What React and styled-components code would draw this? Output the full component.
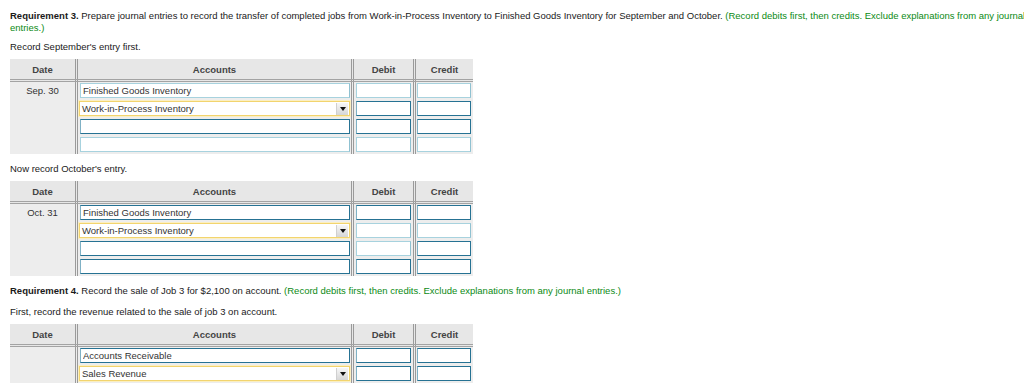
import styled, { createGlobalStyle } from 'styled-components';

const GlobalStyle = createGlobalStyle`
	html, body {
		margin: 0;
		padding: 0;
		background: #ffffff;
		overflow: hidden;
	}

	body {
		font-family: 'Liberation Sans', Arial, sans-serif;
		font-size: 9.5px;
		color: #1a1a1a;
	}
`;

const Page = styled.div`
	width: 1032px;
	padding: 10px 0 0 10px;
`;

const Prompt = styled.p`
	margin: ${({ $gap }) => $gap || 0}px 0 0;
	line-height: 12px;
`;

const Strong = styled.b`
	font-weight: 700;
`;

const Hint = styled.span`
	color: #0b8a14;
`;

const Journal = styled.table`
	margin: 6px 0 0;
	border-collapse: collapse;
	border-spacing: 0;
	background: #ededed;
	table-layout: fixed;
`;

const HeadCell = styled.th`
	width: ${({ $w }) => $w}px;
	height: 20px;
	padding: 0;
	background: #e7e7e7;
	color: #444444;
	font-weight: 700;
	font-size: 9.5px;
	text-align: center;
	border-bottom: 3px double #a3a3a3;
	border-right: ${({ $last }) => ($last ? 'none' : '3px double #9a9a9a')};
`;

const Cell = styled.td`
	padding: 1px ${({ $pr }) => $pr ?? 2}px 2px ${({ $pl }) => $pl ?? 2}px;
	vertical-align: top;
	line-height: 12px;
	border-right: ${({ $last }) => ($last ? 'none' : '3px double #9a9a9a')};
`;

const DateCell = styled(Cell)`
	padding-top: 3px;
	text-align: center;
	color: #333333;
`;

const tones = {
	dark: '#267293 #267293 #267293 #7fb1c5',
	light: '#a7d2de #8fc1d1 #a7d2de #a7d2de',
};

const Field = styled.input`
	display: block;
	box-sizing: border-box;
	width: 100%;
	height: 15px;
	margin: 0;
	padding: 0 2px;
	border: 1px solid;
	border-color: ${({ $tone }) => tones[$tone]};
	border-radius: 0;
	background: #ffffff;
	font-family: 'Liberation Sans', Arial, sans-serif;
	font-size: 9.5px;
	color: #333333;
	outline: none;
`;

const SelectBox = styled.div`
	display: flex;
	align-items: center;
	box-sizing: border-box;
	height: 15px;
	margin: 0 0 0 -1px;
	padding: 0 1px 0 2px;
	background: #ffffff;
	border: 1px solid #f2d46e;
	box-shadow: 0 0 0 1px #fbefc2;
	color: #333333;
`;

const SelectText = styled.span`
	flex: 1;
	white-space: nowrap;
`;

const Arrow = styled.span`
	display: flex;
	align-items: center;
	justify-content: center;
	width: 11px;
	height: 12px;
	background: linear-gradient(#f7f7f7, #d6d6d6);
	border-left: 1px solid #d0d0d0;

	&::after {
		content: '';
		border-left: 3px solid transparent;
		border-right: 3px solid transparent;
		border-top: 4px solid #111111;
	}
`;

const Account = ({ value, tone }) =>
	tone === 'select' ? (
		<SelectBox>
			<SelectText>{value}</SelectText>
			<Arrow />
		</SelectBox>
	) : (
		<Field readOnly value={value} $tone={tone} />
	);

const JournalTable = ({ date, rows }) => (
	<Journal>
		<thead>
			<tr>
				<HeadCell $w={65}>Date</HeadCell>
				<HeadCell $w={273}>Accounts</HeadCell>
				<HeadCell $w={59}>Debit</HeadCell>
				<HeadCell $w={57} $last>
					Credit
				</HeadCell>
			</tr>
		</thead>
		<tbody>
			{rows.map((row, i) => (
				<tr key={i}>
					{i === 0 && <DateCell rowSpan={rows.length}>{date}</DateCell>}
					<Cell $pl={2} $pr={1}>
						<Account value={row.account} tone={row.tones[0]} />
					</Cell>
					<Cell $pl={2} $pr={2}>
						<Field readOnly value="" $tone={row.tones[1]} />
					</Cell>
					<Cell $pl={1} $pr={2} $last>
						<Field readOnly value="" $tone={row.tones[2]} />
					</Cell>
				</tr>
			))}
		</tbody>
	</Journal>
);

const september = [
	{ account: 'Finished Goods Inventory', tones: ['light', 'light', 'light'] },
	{ account: 'Work-in-Process Inventory', tones: ['select', 'dark', 'dark'] },
	{ account: '', tones: ['dark', 'dark', 'dark'] },
	{ account: '', tones: ['light', 'light', 'light'] },
];

const october = [
	{ account: 'Finished Goods Inventory', tones: ['dark', 'dark', 'dark'] },
	{ account: 'Work-in-Process Inventory', tones: ['select', 'light', 'light'] },
	{ account: '', tones: ['dark', 'light', 'dark'] },
	{ account: '', tones: ['dark', 'dark', 'dark'] },
];

const revenue = [
	{ account: 'Accounts Receivable', tones: ['dark', 'dark', 'dark'] },
	{ account: 'Sales Revenue', tones: ['select', 'dark', 'dark'] },
];

const hint =
	'(Record debits first, then credits. Exclude explanations from any journal entries.)';

export default function App() {
	return (
		<>
			<GlobalStyle />
			<Page>
				<Prompt>
					<Strong>Requirement 3.</Strong> Prepare journal entries to record the
					transfer of completed jobs from Work-in-Process Inventory to Finished
					Goods Inventory for September and October. <Hint>{hint}</Hint>
				</Prompt>
				<Prompt $gap={7}>Record September's entry first.</Prompt>
				<JournalTable date="Sep. 30" rows={september} />

				<Prompt $gap={9}>Now record October's entry.</Prompt>
				<JournalTable date="Oct. 31" rows={october} />

				<Prompt $gap={9}>
					<Strong>Requirement 4.</Strong> Record the sale of Job 3 for $2,100 on
					account. <Hint>{hint}</Hint>
				</Prompt>
				<Prompt $gap={9}>First, record the revenue related to the sale of job 3 on account.</Prompt>
				<JournalTable date="" rows={revenue} />
			</Page>
		</>
	);
}
